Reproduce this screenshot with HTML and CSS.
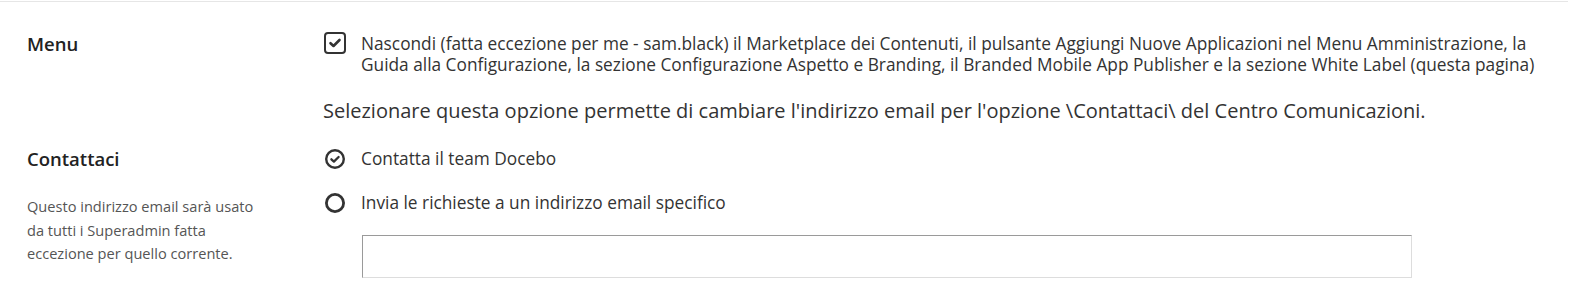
FILE: index.html
```html
<!DOCTYPE html>
<html lang="it">
<head>
<meta charset="utf-8">
<title>White Label</title>
<link rel="stylesheet" href="styles.css">
</head>
<body>
<div class="page">
  <section class="row row-menu">
    <div class="label"><h3 class="title">Menu</h3></div>
    <div class="content">
      <label class="check">
        <span class="checkbox">
          <svg width="22" height="22" viewBox="0 0 22 22"><rect x="1" y="1" width="20" height="20" rx="3" fill="none" stroke="#333" stroke-width="2"/><path d="M6.5 11.2 L9.5 14 L15.5 8" fill="none" stroke="#333" stroke-width="2.6" stroke-linecap="round" stroke-linejoin="round"/></svg>
        </span>
        <span class="check-text">Nascondi (fatta eccezione per me - sam.black) il Marketplace dei Contenuti, il pulsante Aggiungi Nuove Applicazioni nel Menu Amministrazione, la Guida alla Configurazione, la sezione Configurazione Aspetto e Branding, il Branded Mobile App Publisher e la sezione White Label (questa pagina)</span>
      </label>
    </div>
  </section>

  <section class="row row-intro">
    <div class="label"></div>
    <div class="content">
      <p class="intro">Selezionare questa opzione permette di cambiare l'indirizzo email per l'opzione \Contattaci\ del Centro Comunicazioni.</p>
    </div>
  </section>

  <section class="row row-contact">
    <div class="label">
      <h3 class="title">Contattaci</h3>
      <p class="desc">Questo indirizzo email sarà usato da tutti i Superadmin fatta eccezione per quello corrente.</p>
    </div>
    <div class="content">
      <div class="radio">
        <span class="radio-icon">
          <svg width="22" height="22" viewBox="0 0 22 22"><circle cx="11" cy="11" r="8.8" fill="none" stroke="#333" stroke-width="2.4"/><path d="M7.4 11.3 L9.9 13.6 L14.6 9" fill="none" stroke="#333" stroke-width="2.3" stroke-linecap="round" stroke-linejoin="round"/></svg>
        </span>
        <span class="radio-text">Contatta il team Docebo</span>
      </div>
      <div class="radio">
        <span class="radio-icon">
          <svg width="22" height="22" viewBox="0 0 22 22"><circle cx="11" cy="11" r="8.6" fill="none" stroke="#333" stroke-width="2.8"/></svg>
        </span>
        <span class="radio-text">Invia le richieste a un indirizzo email specifico</span>
      </div>
      <div class="field"><input class="email" type="text" aria-label="Indirizzo email"></div>
    </div>
  </section>
</div>
</body>
</html>
```
FILE: styles.css
```css
html, body {
  margin: 0;
  padding: 0;
  background: #fff;
}
body {
  font-family: "Open Sans", "Noto Sans", sans-serif;
  color: #333;
}
.page {
  width: 1568px;
  margin-top: 1px;
  border-top: 1px solid #e6e6e6;
  box-sizing: border-box;
  padding-left: 27px;
}
.row {
  display: flex;
}
.label {
  width: 296px;
  flex: none;
}
.content {
  width: 1236px;
  flex: none;
}
.title {
  margin: 0;
  font-size: 18.5px;
  line-height: 24px;
  font-weight: 600;
  color: #222;
}
.row-menu {
  padding-top: 30px;
}
.check {
  display: flex;
  align-items: flex-start;
}
.checkbox {
  flex: none;
  width: 22px;
  height: 22px;
  margin-left: 1px;
  margin-right: 15px;
}
.checkbox svg, .radio-icon svg {
  display: block;
}
.check-text {
  font-size: 17.3px;
  line-height: 21px;
  margin-top: 1px;
}
.row-intro {
  padding-top: 22px;
}
.intro {
  margin: 0;
  font-size: 20px;
  line-height: 28px;
}
.row-contact {
  padding-top: 22px;
}
.desc {
  margin: 24px 0 0;
  width: 240px;
  font-size: 14.6px;
  line-height: 23.5px;
  color: #555;
}
.radio {
  display: flex;
  align-items: center;
  height: 24px;
  margin-bottom: 20px;
}
.radio-icon {
  flex: none;
  width: 22px;
  height: 22px;
  margin-left: 1px;
  margin-right: 15px;
}
.radio-text {
  font-size: 17.3px;
  line-height: 24px;
}
.field {
  margin-top: 7px;
  padding-left: 39px;
}
.email {
  display: block;
  box-sizing: border-box;
  width: 1050px;
  height: 43px;
  margin: 0;
  padding: 0 10px;
  border: 1px solid #ddd;
  border-top-color: #9a9a9a;
  border-left-color: #9a9a9a;
  font-family: inherit;
  font-size: 16px;
  background: #fff;
  outline: none;
}
```
